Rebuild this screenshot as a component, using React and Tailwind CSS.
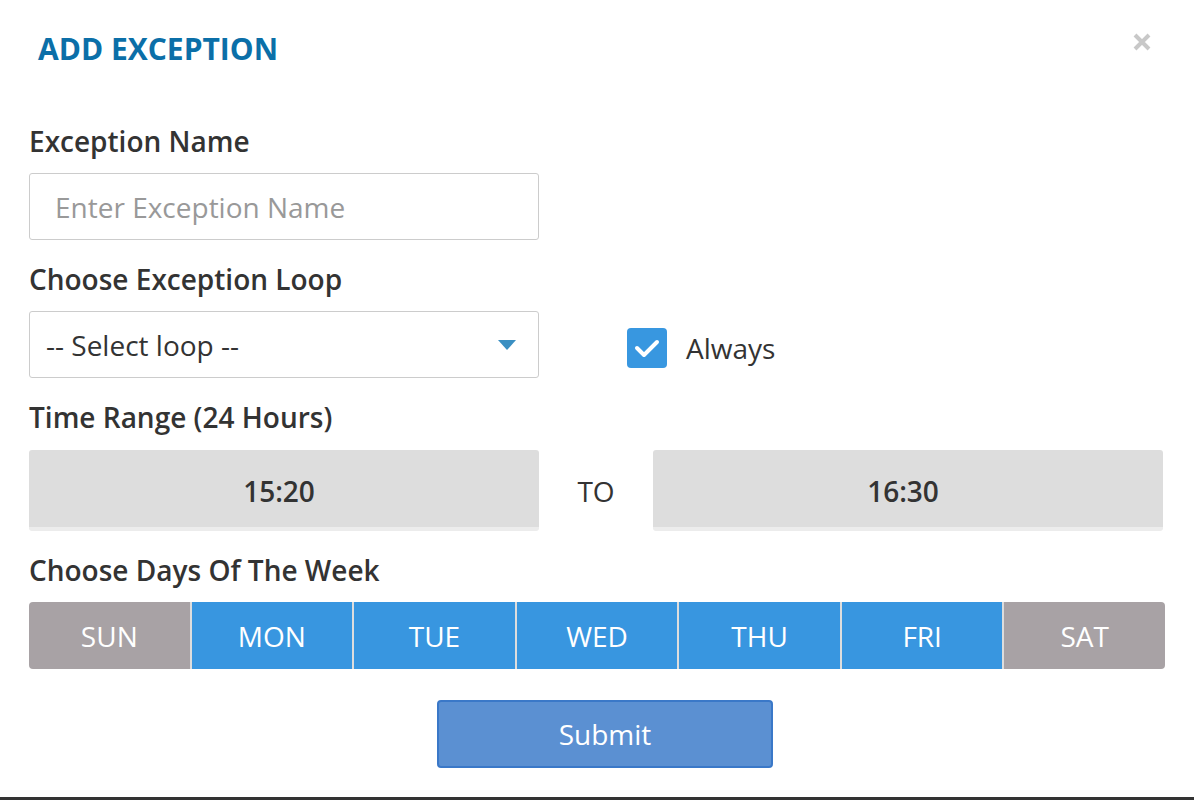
import { useState } from 'react'

const DAYS = [
  { key: 'SUN', on: false },
  { key: 'MON', on: true },
  { key: 'TUE', on: true },
  { key: 'WED', on: true },
  { key: 'THU', on: true },
  { key: 'FRI', on: true },
  { key: 'SAT', on: false },
]

export default function App() {
  const [days, setDays] = useState(DAYS)
  const [always, setAlways] = useState(true)

  return (
    <div className="h-[800px] w-[1194px] bg-[#333] font-['Open_Sans',sans-serif] text-[#333]">
      <div className="h-[797px] bg-white relative">
        {/* Header */}
        <div className="flex items-start justify-between pl-[38px] pr-[42px] pt-[27px]">
          <h1 className="text-[30px] font-bold leading-[44px] text-[#0b6fa8]">ADD EXCEPTION</h1>
          <button className="mt-[5px] text-[#c8c8c8]">
            <svg width="20" height="20" viewBox="0 0 20 20">
              <path d="M3 3 L17 17 M17 3 L3 17" stroke="currentColor" strokeWidth="4" strokeLinecap="butt" />
            </svg>
          </button>
        </div>

        <div className="px-[29px] pt-[51px]">
          {/* Exception name */}
          <label className="block text-[28px] font-semibold leading-[38px] text-[#333]">Exception Name</label>
          <input
            placeholder="Enter Exception Name"
            className="mt-[13px] block h-[67px] w-[510px] rounded-[3px] border border-[#cccccc] px-[25px] text-[28px] text-[#333] placeholder:text-[#999] outline-none"
          />

          {/* Loop */}
          <label className="mt-[20px] block text-[28px] font-semibold leading-[38px] text-[#333]">Choose Exception Loop</label>
          <div className="mt-[13px] flex items-center">
            <div className="flex h-[67px] w-[510px] items-center justify-between rounded-[3px] border border-[#cccccc] pl-[16px] pr-[22px]">
              <span className="text-[28px] text-[#333]">-- Select loop --</span>
              <svg width="18" height="10" viewBox="0 0 18 10">
                <path d="M0 0 L18 0 L9 10 Z" fill="#3a8fc2" />
              </svg>
            </div>
            <div className="mt-[7px] flex items-center">
              <button
                onClick={() => setAlways(!always)}
                className={`ml-[88px] flex h-[40px] w-[40px] items-center justify-center rounded-[4px] ${always ? 'bg-[#3897e0]' : 'border border-[#ccc] bg-white'}`}
              >
                {always && (
                  <svg width="28" height="22" viewBox="0 0 28 22">
                    <path d="M4 11 L11 18 L24 5" fill="none" stroke="white" strokeWidth="4" strokeLinecap="round" strokeLinejoin="round" />
                  </svg>
                )}
              </button>
              <span className="ml-[19px] text-[28px] text-[#333]">Always</span>
            </div>
          </div>

          {/* Time range */}
          <label className="mt-[20px] block text-[28px] font-semibold leading-[38px] text-[#333]">Time Range (24 Hours)</label>
          <div className="mt-[14px] flex items-center">
            <div className="flex h-[81px] w-[510px] items-center justify-center rounded-[3px] border-b-[4px] border-[#ececec] bg-[#dddddd] pt-[4px] pr-[10px] text-[28px] font-semibold text-[#333]">
              15:20
            </div>
            <div className="w-[114px] text-center text-[28px] text-[#333]">TO</div>
            <div className="flex h-[81px] w-[510px] items-center justify-center rounded-[3px] border-b-[4px] border-[#ececec] bg-[#dddddd] pt-[4px] pr-[10px] text-[28px] font-semibold text-[#333]">
              16:30
            </div>
          </div>

          {/* Days */}
          <label className="mt-[20px] block text-[28px] font-semibold leading-[38px] text-[#333]">Choose Days Of The Week</label>
          <div className="mt-[13px] flex h-[67px] w-[1136px] overflow-hidden rounded-[4px]">
            {days.map((d, i) => (
              <button
                key={d.key}
                onClick={() => setDays(days.map(x => x.key === d.key ? { ...x, on: !x.on } : x))}
                className={`flex-1 text-[28px] text-white ${i > 0 ? 'border-l-2 border-[#dddddd]' : ''} ${d.on ? 'bg-[#3896e0]' : 'bg-[#a8a2a5]'}`}
              >
                {d.key}
              </button>
            ))}
          </div>

          {/* Submit */}
          <div className="mt-[31px] flex justify-center">
            <button className="ml-[16px] h-[68px] w-[336px] rounded-[4px] border-2 border-[#3a78c8] bg-[#5b90d2] text-[28px] text-white">
              Submit
            </button>
          </div>
        </div>
      </div>
    </div>
  )
}
